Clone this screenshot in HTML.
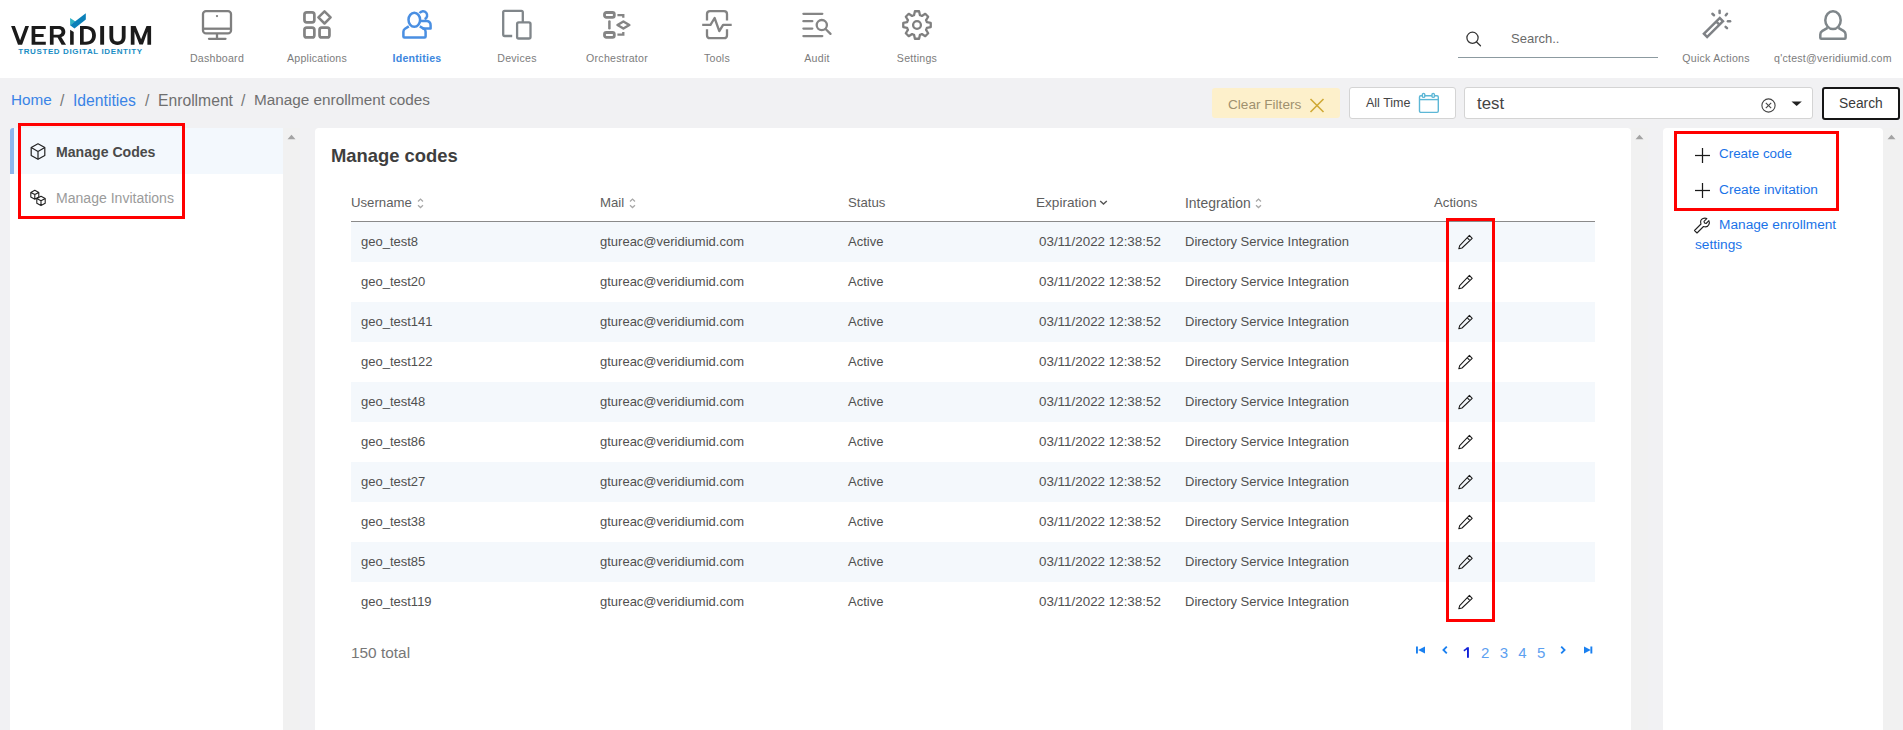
<!DOCTYPE html>
<html><head><meta charset="utf-8">
<style>
*{margin:0;padding:0;box-sizing:border-box}
html,body{width:1903px;height:730px;overflow:hidden;background:#f1f1f3;font-family:"Liberation Sans",sans-serif;position:relative}
.a{position:absolute;white-space:nowrap}
#hdr{position:absolute;left:0;top:0;width:1903px;height:78px;background:#fff}
.nl{position:absolute;top:52px;font-size:10.6px;color:#7c7c7c;letter-spacing:0.25px;text-align:center;width:100px}
.ic{position:absolute;overflow:visible}
.panel{position:absolute;background:#fff;border-radius:4px 4px 0 0}
.rb{position:absolute;border:3px solid #ff0000}
.row{position:absolute;left:351px;width:1244px;height:40px}
.row.s{background:#f4f8fc}
.cell{position:absolute;top:12px;font-size:13px;color:#505050;white-space:nowrap}
.th{position:absolute;top:195px;font-size:13.2px;color:#5e5e5e;white-space:nowrap}
.pen{position:absolute;left:1105px;top:10px}
</style></head><body>
<div id="hdr">
  <!-- logo -->
  <svg class="ic" style="left:0;top:0" width="170" height="78" viewBox="0 0 170 78">
    <g fill="#1b1b1b">
      <polygon points="11.1,26 14.9,26 20.1,40.2 25.3,26 29,26 22.1,44.7 18,44.7"/>
      <path d="M31.6 26 H45.8 V28.9 H35.3 V33.9 H43.6 V36.9 H35.3 V41.7 H45.8 V44.7 H31.6 Z"/>
      <path fill-rule="evenodd" d="M49.9 26 H58.5 C63 26 65.3 28.4 65.3 31.7 C65.3 35 63 37.5 58.5 37.5 H53.6 V44.7 H49.9 Z M53.6 28.9 V34.7 H58.3 C60.5 34.7 61.5 33.5 61.5 31.8 C61.5 30 60.5 28.9 58.3 28.9 Z"/>
      <polygon points="57.3,37 61.3,37 66,44.7 61.6,44.7"/>
      <polygon points="70.1,29.7 73.7,32.1 73.7,44.7 70.1,44.7"/>
      <path fill-rule="evenodd" d="M80 26 H86 C92.3 26 95.9 29.5 95.9 35.3 C95.9 41.1 92.3 44.7 86 44.7 H80 Z M83.7 29 V41.7 H85.8 C90 41.7 92.1 39.3 92.1 35.3 C92.1 31.3 90 29 85.8 29 Z"/>
      <rect x="100.2" y="26" width="3.9" height="18.7"/>
      <path d="M109.4 26 H113.2 V37 C113.2 40 114.8 41.6 117.5 41.6 C120.2 41.6 121.8 40 121.8 37 V26 H125.6 V37 C125.6 42 122.5 44.9 117.5 44.9 C112.5 44.9 109.4 42 109.4 37 Z"/>
      <polygon points="130.8,26 135.6,26 141.1,39.3 146.5,26 151.1,26 151.1,44.7 147.4,44.7 147.4,31.8 142.9,44.5 139.4,44.5 134.5,31.8 134.5,44.7 130.8,44.7"/>
    </g>
    <polygon points="70.1,17.9 75.5,21.6 70.1,25.5" fill="#2fb3c4"/>
    <polygon points="70.1,25.3 85.8,13.2 85.8,19.5 74.5,28.6" fill="#0b80b9"/>
    <text x="18.2" y="54" font-family="Liberation Sans" font-weight="700" font-size="8" fill="#1a8dc4" textLength="124" lengthAdjust="spacing">TRUSTED DIGITAL IDENTITY</text>
  </svg>
  <!-- Dashboard monitor -->
  <svg class="ic" style="left:200px;top:8px" width="34" height="34" viewBox="0 0 34 34" fill="none" stroke="#7f7f7f" stroke-width="2.3">
    <rect x="3" y="3.1" width="28" height="22.3" rx="3"/>
    <line x1="3" y1="20.7" x2="31" y2="20.7"/>
    <circle cx="17" cy="8.1" r="1.15" fill="#7f7f7f" stroke="none"/>
    <line x1="17" y1="25.5" x2="17" y2="30.5"/>
    <line x1="9" y1="30.8" x2="25.5" y2="30.8" stroke-linecap="round"/>
  </svg>
  <!-- Applications -->
  <svg class="ic" style="left:300px;top:8px" width="34" height="34" viewBox="0 0 34 34" fill="none" stroke="#838383" stroke-width="2.7">
    <rect x="4.45" y="4.45" width="9.9" height="9.9" rx="2.3"/>
    <rect x="4.45" y="19.55" width="9.9" height="9.9" rx="2.3"/>
    <rect x="19.55" y="19.55" width="9.9" height="9.9" rx="2.3"/>
    <path d="M24.5 3.3 L30.6 9.4 L24.5 15.5 L18.4 9.4 Z" stroke-linejoin="round" stroke-width="2.5"/>
  </svg>
  <!-- Identities -->
  <svg class="ic" style="left:400px;top:8px" width="34" height="34" viewBox="0 0 34 34" fill="none" stroke="#4a8fe2" stroke-width="2.5" stroke-linejoin="round">
    <ellipse cx="14.3" cy="11.8" rx="5.8" ry="7.0"/>
    <path d="M8.8 18.4 L5 20.8 Q3.4 21.9 3.4 23.8 L3.4 28.6 Q3.4 29.6 4.4 29.6 L24.6 29.6 Q25.6 29.6 25.6 28.6 L25.6 23.8 Q25.6 21.9 24 20.8 L19.8 18.4"/>
    <path d="M19.6 5.2 A4.1 4.1 0 1 1 24.6 11.2"/>
    <path d="M20.5 13 L26.8 13 Q30.6 13.5 30.6 17.2 L30.6 20.4 L22.5 20.4"/>
  </svg>
  <!-- Devices -->
  <svg class="ic" style="left:500px;top:8px" width="34" height="34" viewBox="0 0 34 34" fill="none" stroke="#80868a" stroke-width="2.3" stroke-linecap="round">
    <path d="M12.2 28 L4.6 28 Q3.2 28 3.2 26.6 L3.2 4.2 Q3.2 2.8 4.6 2.8 L21.4 2.8 Q22.8 2.8 22.8 4.2 L22.8 14" stroke-linecap="butt"/>
    <rect x="17.1" y="14.4" width="13.4" height="16.1" rx="1.6"/>
  </svg>
  <!-- Orchestrator -->
  <svg class="ic" style="left:600px;top:8px" width="34" height="34" viewBox="0 0 34 34" fill="none" stroke="#858585" stroke-width="2.8">
    <rect x="4.5" y="4.5" width="9.8" height="4.9" rx="1.8"/>
    <rect x="4.5" y="24.5" width="9.8" height="4.9" rx="1.8"/>
    <line x1="9.4" y1="13.6" x2="9.4" y2="20.3" stroke-width="2.5" stroke-linecap="round"/>
    <path d="M17.4 7.2 L23.3 7.2 L23.3 9.8 M17.4 26.6 L23.3 26.6 L23.3 24" stroke-width="2.3"/>
    <path d="M23.4 13.5 L29.3 17 L23.4 20.5 L17.5 17 Z" stroke-linejoin="round" stroke-width="2.5"/>
  </svg>
  <!-- Tools -->
  <svg class="ic" style="left:700px;top:8px" width="34" height="34" viewBox="0 0 34 34" fill="none" stroke="#838383" stroke-width="2.3">
    <path d="M7 12.4 L7 6.1 Q7 3.1 10 3.1 L24 3.1 Q27 3.1 27 6.1 L27 12.4"/>
    <path d="M7 21.2 L7 27.2 Q7 30.2 10 30.2 L24 30.2 Q27 30.2 27 27.2 L27 21.2"/>
    <path d="M2.2 16.8 L10.5 16.8 L14.6 10 L19.3 23.1 L23.1 16.8 L31.7 16.8" stroke-linejoin="round"/>
  </svg>
  <!-- Audit -->
  <svg class="ic" style="left:800px;top:8px" width="34" height="34" viewBox="0 0 34 34" fill="none" stroke="#858585" stroke-width="2.3" stroke-linecap="round">
    <line x1="3.4" y1="5.8" x2="22.3" y2="5.8"/>
    <line x1="3.4" y1="13.2" x2="12.3" y2="13.2"/>
    <line x1="3.4" y1="20.6" x2="12.3" y2="20.6"/>
    <line x1="3.4" y1="28.1" x2="22.3" y2="28.1"/>
    <circle cx="21.8" cy="17.1" r="5.1"/>
    <line x1="25.6" y1="21" x2="30.5" y2="25.9"/>
  </svg>
  <!-- Settings gear -->
  <svg class="ic" style="left:900px;top:8px" width="34" height="34" viewBox="0 0 34 34" fill="none" stroke="#7f7f7f" stroke-width="2.3" stroke-linejoin="round">
    <path d="M14.05 7.13 L14.92 3.26 L19.08 3.26 L19.95 7.13 A10.3 10.3 0 0 1 21.90 7.94 L25.25 5.81 L28.19 8.75 L26.06 12.10 A10.3 10.3 0 0 1 26.87 14.05 L30.74 14.92 L30.74 19.08 L26.87 19.95 A10.3 10.3 0 0 1 26.06 21.90 L28.19 25.25 L25.25 28.19 L21.90 26.06 A10.3 10.3 0 0 1 19.95 26.87 L19.08 30.74 L14.92 30.74 L14.05 26.87 A10.3 10.3 0 0 1 12.10 26.06 L8.75 28.19 L5.81 25.25 L7.94 21.90 A10.3 10.3 0 0 1 7.13 19.95 L3.26 19.08 L3.26 14.92 L7.13 14.05 A10.3 10.3 0 0 1 7.94 12.10 L5.81 8.75 L8.75 5.81 L12.10 7.94 A10.3 10.3 0 0 1 14.05 7.13 Z"/>
    <circle cx="17" cy="17" r="3.9"/>
  </svg>
  <!-- Search -->
  <svg class="ic" style="left:1464px;top:29px" width="20" height="20" viewBox="0 0 20 20" fill="none" stroke="#333" stroke-width="1.25">
    <circle cx="8.5" cy="8.8" r="5.6"/>
    <line x1="12.6" y1="13" x2="16.5" y2="16.8" stroke-linecap="round"/>
  </svg>
  <div class="a" style="left:1511px;top:31px;font-size:13px;color:#6a6a6a">Search..</div>
  <div class="a" style="left:1458px;top:56.5px;width:200px;height:1.3px;background:#8c9aa0"></div>
  <!-- Quick actions -->
  <svg class="ic" style="left:1700px;top:8px" width="34" height="34" viewBox="0 0 34 34" fill="none" stroke="#7f8286" stroke-width="2.5" stroke-linecap="round">
    <g transform="translate(13.45 19.5) rotate(-45)"><rect x="-11.2" y="-2.25" width="22.4" height="4.5" stroke-linecap="butt"/><line x1="6.2" y1="-2.25" x2="6.2" y2="2.25" stroke-linecap="butt"/></g>
    <line x1="19.6" y1="2.8" x2="19.6" y2="5.0"/>
    <line x1="12.4" y1="5.8" x2="14.0" y2="7.2"/>
    <line x1="27.0" y1="5.8" x2="25.8" y2="7.2"/>
    <line x1="27.9" y1="13.3" x2="30.1" y2="13.3"/>
    <line x1="25.6" y1="18.9" x2="27.0" y2="20.2"/>
  </svg>
  <div class="a" style="left:1666px;top:52px;width:100px;text-align:center;font-size:10.6px;color:#7c7c7c;letter-spacing:0.25px">Quick Actions</div>
  <!-- user -->
  <svg class="ic" style="left:1816px;top:8px" width="34" height="34" viewBox="0 0 34 34" fill="none" stroke="#7f868a" stroke-width="2.5" stroke-linejoin="round">
    <ellipse cx="17" cy="12.15" rx="7.7" ry="8.9"/>
    <path d="M11.6 19.9 L6.4 22.9 Q4.3 24.2 4.3 26.5 L4.3 29.7 Q4.3 30.7 5.3 30.7 L28.6 30.7 Q29.6 30.7 29.6 29.7 L29.6 26.5 Q29.6 24.2 27.5 22.9 L22.4 19.9"/>
  </svg>
  <div class="a" style="left:1774px;top:52px;font-size:10.6px;color:#7c7c7c;letter-spacing:0.25px">q'ctest@veridiumid.com</div>
  <!-- nav labels -->
  <div class="nl" style="left:167px">Dashboard</div>
  <div class="nl" style="left:267px">Applications</div>
  <div class="nl" style="left:367px;color:#3d87de;font-weight:700">Identities</div>
  <div class="nl" style="left:467px">Devices</div>
  <div class="nl" style="left:567px">Orchestrator</div>
  <div class="nl" style="left:667px">Tools</div>
  <div class="nl" style="left:767px">Audit</div>
  <div class="nl" style="left:867px">Settings</div>
</div>

<!-- breadcrumb -->
<div class="a" style="left:11px;top:90.5px;font-size:15.3px;color:#3a84e6">Home</div>
<div class="a" style="left:60px;top:91.5px;font-size:15.7px;color:#777">/</div>
<div class="a" style="left:73px;top:91.5px;font-size:15.7px;color:#3a84e6">Identities</div>
<div class="a" style="left:145px;top:91.5px;font-size:15.7px;color:#777">/</div>
<div class="a" style="left:158px;top:91.5px;font-size:15.7px;color:#6f6f6f">Enrollment</div>
<div class="a" style="left:241px;top:91.5px;font-size:15.7px;color:#777">/</div>
<div class="a" style="left:254px;top:90.5px;font-size:15.3px;color:#6f6f6f">Manage enrollment codes</div>

<!-- panels -->
<div class="panel" style="left:10px;top:128px;width:273px;height:602px"></div>
<div class="panel" style="left:315px;top:128px;width:1316px;height:602px"></div>
<div class="panel" style="left:1663px;top:128px;width:220px;height:602px"></div>


<!-- filter bar -->
<div class="a" style="left:1212px;top:88px;width:128px;height:30px;background:#fdf0cb;border-radius:3px"></div>
<div class="a" style="left:1228px;top:96.5px;font-size:13.6px;color:#9f916f">Clear Filters</div>
<svg class="ic" style="left:1309px;top:97px" width="16" height="16" viewBox="0 0 16 16" stroke="#cfa935" stroke-width="1.6" fill="none">
  <line x1="1.5" y1="2" x2="14.5" y2="15"/><line x1="14.5" y1="2" x2="1.5" y2="15"/>
</svg>
<div class="a" style="left:1349px;top:87px;width:107px;height:32px;background:#fff;border:1px solid #d4d4d4;border-radius:3px"></div>
<div class="a" style="left:1366px;top:96px;font-size:12.5px;color:#444">All Time</div>
<svg class="ic" style="left:1418px;top:92px" width="22" height="22" viewBox="0 0 22 22" stroke="#5db7d6" stroke-width="1.4" fill="none">
  <rect x="1.5" y="3.8" width="18.8" height="16.6" rx="1.3"/>
  <line x1="1.5" y1="7.6" x2="20.3" y2="7.6"/>
  <rect x="4.4" y="1.4" width="2.4" height="4" rx="1.2" fill="#fff"/><rect x="14" y="1.4" width="2.4" height="4" rx="1.2" fill="#fff"/>
</svg>
<div class="a" style="left:1464px;top:87px;width:349px;height:32px;background:#fff;border:1px solid #d4d4d4;border-radius:3px"></div>
<div class="a" style="left:1477px;top:94px;font-size:16.8px;color:#444">test</div>
<svg class="ic" style="left:1759.5px;top:97px" width="17" height="17" viewBox="0 0 17 17" stroke="#444" stroke-width="1.1" fill="none">
  <circle cx="8.5" cy="8.5" r="6.6"/>
  <line x1="5.8" y1="5.8" x2="11.2" y2="11.2"/><line x1="11.2" y1="5.8" x2="5.8" y2="11.2"/>
</svg>
<svg class="ic" style="left:1791px;top:100.5px" width="12" height="6" viewBox="0 0 12 6"><path d="M0.5 0.6 L10.8 0.6 L5.65 5 Z" fill="#222"/></svg>
<div class="a" style="left:1822px;top:86.5px;width:77.5px;height:33px;background:#fff;border:2px solid #161616;border-radius:3px"></div>
<div class="a" style="left:1839px;top:96px;font-size:13.8px;color:#3a3a3a">Search</div>

<!-- scroll strips -->
<div class="a" style="left:283px;top:128px;width:17px;height:602px;background:#f1f1f1"></div>
<div class="a" style="left:1631px;top:128px;width:17px;height:602px;background:#f1f1f1"></div>
<div class="a" style="left:1883px;top:128px;width:17px;height:602px;background:#f1f1f1"></div>
<svg class="ic" style="left:287px;top:134px" width="9" height="6" viewBox="0 0 9 6"><path d="M0.5 5.2 L4.5 0.8 L8.5 5.2 Z" fill="#a3a3a3"/></svg>
<svg class="ic" style="left:1635px;top:134px" width="9" height="6" viewBox="0 0 9 6"><path d="M0.5 5.2 L4.5 0.8 L8.5 5.2 Z" fill="#a3a3a3"/></svg>
<svg class="ic" style="left:1887px;top:134px" width="9" height="6" viewBox="0 0 9 6"><path d="M0.5 5.2 L4.5 0.8 L8.5 5.2 Z" fill="#a3a3a3"/></svg>

<!-- left panel -->
<div class="a" style="left:10px;top:128px;width:273px;height:46px;background:#f3f8fd"></div>
<div class="a" style="left:10px;top:128px;width:4px;height:46px;background:#8cb6ec;border-radius:3px 0 0 0"></div>
<svg class="ic" style="left:29px;top:142px" width="18" height="19" viewBox="0 0 18 19" stroke="#222" stroke-width="1.2" fill="none" stroke-linejoin="round">
  <path d="M9 1.8 L15.8 5.6 L15.8 13.4 L9 17.2 L2.2 13.4 L2.2 5.6 Z"/>
  <path d="M2.2 5.6 L9 9.4 L15.8 5.6 M9 9.4 L9 17.2"/>
</svg>
<div class="a" style="left:56px;top:143.5px;font-size:14.1px;font-weight:700;color:#4a4a4a">Manage Codes</div>
<svg class="ic" style="left:28px;top:188px" width="20" height="20" viewBox="0 0 20 20" stroke="#222" stroke-width="1.1" fill="none" stroke-linejoin="round">
  <path d="M6.8 2.2 L10.8 4.4 L10.8 9 L6.8 11.2 L2.8 9 L2.8 4.4 Z M2.8 4.4 L6.8 6.6 L10.8 4.4 M6.8 6.6 L6.8 11.2"/>
  <path d="M13 8.2 L17.2 10.5 L17.2 15.3 L13 17.6 L8.8 15.3 L8.8 10.5 Z M8.8 10.5 L13 12.8 L17.2 10.5 M13 12.8 L13 17.6"/>
</svg>
<div class="a" style="left:56px;top:189.5px;font-size:14.05px;color:#9b9b9b">Manage Invitations</div>
<div class="rb" style="left:18px;top:123px;width:167px;height:96px"></div>

<!-- main -->
<div class="a" style="left:331px;top:145px;font-size:18.4px;font-weight:700;color:#3e3e3e">Manage codes</div>
<div class="th" style="left:351px">Username</div>
<div class="th" style="left:600px">Mail</div>
<div class="th" style="left:848px">Status</div>
<div class="th" style="left:1036px;font-size:13.6px">Expiration</div>
<div class="th" style="left:1185px;font-size:13.9px">Integration</div>
<div class="th" style="left:1434px">Actions</div>
<svg class="ic" style="left:416px;top:196.5px" width="9" height="13" viewBox="0 0 9 13" fill="none" stroke="#a8a8a8" stroke-width="1.3"><path d="M2 4.4 L4.5 2.1 L7 4.4 M2 8.3 L4.5 10.6 L7 8.3"/></svg>
<svg class="ic" style="left:627.5px;top:196.5px" width="9" height="13" viewBox="0 0 9 13" fill="none" stroke="#a8a8a8" stroke-width="1.3"><path d="M2 4.4 L4.5 2.1 L7 4.4 M2 8.3 L4.5 10.6 L7 8.3"/></svg>
<svg class="ic" style="left:1254px;top:196.5px" width="9" height="13" viewBox="0 0 9 13" fill="none" stroke="#a8a8a8" stroke-width="1.3"><path d="M2 4.4 L4.5 2.1 L7 4.4 M2 8.3 L4.5 10.6 L7 8.3"/></svg>
<svg class="ic" style="left:1099px;top:199px" width="9" height="7" viewBox="0 0 9 7" fill="none" stroke="#555" stroke-width="1.4"><path d="M1.2 2 L4.5 5 L7.8 2"/></svg>
<div class="a" style="left:351px;top:221px;width:1244px;height:1px;background:#8a8a8a"></div>
<div class="row s" style="top:222px"><div class="cell" style="left:10px">geo_test8</div><div class="cell" style="left:249px">gtureac@veridiumid.com</div><div class="cell" style="left:497px">Active</div><div class="cell" style="left:688px;font-size:13.4px">03/11/2022 12:38:52</div><div class="cell" style="left:834px">Directory Service Integration</div><svg class="pen" width="20" height="20" viewBox="0 0 20 20" fill="none" stroke="#1a1a1a" stroke-width="1.05" stroke-linejoin="round"><path d="M2.8 16.8 L3.7 13.6 L13.4 3.4 L16.2 6.3 L6 16 Z M11.2 5.7 L13.9 8.6"/></svg></div>
<div class="row" style="top:262px"><div class="cell" style="left:10px">geo_test20</div><div class="cell" style="left:249px">gtureac@veridiumid.com</div><div class="cell" style="left:497px">Active</div><div class="cell" style="left:688px;font-size:13.4px">03/11/2022 12:38:52</div><div class="cell" style="left:834px">Directory Service Integration</div><svg class="pen" width="20" height="20" viewBox="0 0 20 20" fill="none" stroke="#1a1a1a" stroke-width="1.05" stroke-linejoin="round"><path d="M2.8 16.8 L3.7 13.6 L13.4 3.4 L16.2 6.3 L6 16 Z M11.2 5.7 L13.9 8.6"/></svg></div>
<div class="row s" style="top:302px"><div class="cell" style="left:10px">geo_test141</div><div class="cell" style="left:249px">gtureac@veridiumid.com</div><div class="cell" style="left:497px">Active</div><div class="cell" style="left:688px;font-size:13.4px">03/11/2022 12:38:52</div><div class="cell" style="left:834px">Directory Service Integration</div><svg class="pen" width="20" height="20" viewBox="0 0 20 20" fill="none" stroke="#1a1a1a" stroke-width="1.05" stroke-linejoin="round"><path d="M2.8 16.8 L3.7 13.6 L13.4 3.4 L16.2 6.3 L6 16 Z M11.2 5.7 L13.9 8.6"/></svg></div>
<div class="row" style="top:342px"><div class="cell" style="left:10px">geo_test122</div><div class="cell" style="left:249px">gtureac@veridiumid.com</div><div class="cell" style="left:497px">Active</div><div class="cell" style="left:688px;font-size:13.4px">03/11/2022 12:38:52</div><div class="cell" style="left:834px">Directory Service Integration</div><svg class="pen" width="20" height="20" viewBox="0 0 20 20" fill="none" stroke="#1a1a1a" stroke-width="1.05" stroke-linejoin="round"><path d="M2.8 16.8 L3.7 13.6 L13.4 3.4 L16.2 6.3 L6 16 Z M11.2 5.7 L13.9 8.6"/></svg></div>
<div class="row s" style="top:382px"><div class="cell" style="left:10px">geo_test48</div><div class="cell" style="left:249px">gtureac@veridiumid.com</div><div class="cell" style="left:497px">Active</div><div class="cell" style="left:688px;font-size:13.4px">03/11/2022 12:38:52</div><div class="cell" style="left:834px">Directory Service Integration</div><svg class="pen" width="20" height="20" viewBox="0 0 20 20" fill="none" stroke="#1a1a1a" stroke-width="1.05" stroke-linejoin="round"><path d="M2.8 16.8 L3.7 13.6 L13.4 3.4 L16.2 6.3 L6 16 Z M11.2 5.7 L13.9 8.6"/></svg></div>
<div class="row" style="top:422px"><div class="cell" style="left:10px">geo_test86</div><div class="cell" style="left:249px">gtureac@veridiumid.com</div><div class="cell" style="left:497px">Active</div><div class="cell" style="left:688px;font-size:13.4px">03/11/2022 12:38:52</div><div class="cell" style="left:834px">Directory Service Integration</div><svg class="pen" width="20" height="20" viewBox="0 0 20 20" fill="none" stroke="#1a1a1a" stroke-width="1.05" stroke-linejoin="round"><path d="M2.8 16.8 L3.7 13.6 L13.4 3.4 L16.2 6.3 L6 16 Z M11.2 5.7 L13.9 8.6"/></svg></div>
<div class="row s" style="top:462px"><div class="cell" style="left:10px">geo_test27</div><div class="cell" style="left:249px">gtureac@veridiumid.com</div><div class="cell" style="left:497px">Active</div><div class="cell" style="left:688px;font-size:13.4px">03/11/2022 12:38:52</div><div class="cell" style="left:834px">Directory Service Integration</div><svg class="pen" width="20" height="20" viewBox="0 0 20 20" fill="none" stroke="#1a1a1a" stroke-width="1.05" stroke-linejoin="round"><path d="M2.8 16.8 L3.7 13.6 L13.4 3.4 L16.2 6.3 L6 16 Z M11.2 5.7 L13.9 8.6"/></svg></div>
<div class="row" style="top:502px"><div class="cell" style="left:10px">geo_test38</div><div class="cell" style="left:249px">gtureac@veridiumid.com</div><div class="cell" style="left:497px">Active</div><div class="cell" style="left:688px;font-size:13.4px">03/11/2022 12:38:52</div><div class="cell" style="left:834px">Directory Service Integration</div><svg class="pen" width="20" height="20" viewBox="0 0 20 20" fill="none" stroke="#1a1a1a" stroke-width="1.05" stroke-linejoin="round"><path d="M2.8 16.8 L3.7 13.6 L13.4 3.4 L16.2 6.3 L6 16 Z M11.2 5.7 L13.9 8.6"/></svg></div>
<div class="row s" style="top:542px"><div class="cell" style="left:10px">geo_test85</div><div class="cell" style="left:249px">gtureac@veridiumid.com</div><div class="cell" style="left:497px">Active</div><div class="cell" style="left:688px;font-size:13.4px">03/11/2022 12:38:52</div><div class="cell" style="left:834px">Directory Service Integration</div><svg class="pen" width="20" height="20" viewBox="0 0 20 20" fill="none" stroke="#1a1a1a" stroke-width="1.05" stroke-linejoin="round"><path d="M2.8 16.8 L3.7 13.6 L13.4 3.4 L16.2 6.3 L6 16 Z M11.2 5.7 L13.9 8.6"/></svg></div>
<div class="row" style="top:582px"><div class="cell" style="left:10px">geo_test119</div><div class="cell" style="left:249px">gtureac@veridiumid.com</div><div class="cell" style="left:497px">Active</div><div class="cell" style="left:688px;font-size:13.4px">03/11/2022 12:38:52</div><div class="cell" style="left:834px">Directory Service Integration</div><svg class="pen" width="20" height="20" viewBox="0 0 20 20" fill="none" stroke="#1a1a1a" stroke-width="1.05" stroke-linejoin="round"><path d="M2.8 16.8 L3.7 13.6 L13.4 3.4 L16.2 6.3 L6 16 Z M11.2 5.7 L13.9 8.6"/></svg></div>

<div class="a" style="left:351px;top:644px;font-size:15.4px;color:#777">150 total</div>
<svg class="ic" style="left:1415px;top:646px" width="11" height="8" viewBox="0 0 11 8" fill="#1a80f0"><rect x="1" y="0.5" width="1.9" height="7"/><path d="M10 0.5 L3.2 4 L10 7.5 Z"/></svg>
<svg class="ic" style="left:1441px;top:645px" width="8" height="10" viewBox="0 0 8 10" fill="none" stroke="#1a80f0" stroke-width="1.8"><path d="M5.8 1.6 L2.4 5 L5.8 8.4"/></svg>
<svg class="ic" style="left:1462px;top:646px" width="9" height="13" viewBox="0 0 9 13" fill="#1020d8"><path d="M5 1.2 L6.9 1.2 L6.9 11.8 L5 11.8 L5 3.6 Q3.6 4.8 2.1 5.4 L1.5 3.9 Q3.6 2.9 5 1.2 Z"/></svg>
<div class="a" style="left:1481px;top:643.5px;font-size:15px;color:#5ca0f0">2</div>
<div class="a" style="left:1499.8px;top:643.5px;font-size:15px;color:#5ca0f0">3</div>
<div class="a" style="left:1518.3px;top:643.5px;font-size:15px;color:#5ca0f0">4</div>
<div class="a" style="left:1537px;top:643.5px;font-size:15px;color:#5ca0f0">5</div>
<svg class="ic" style="left:1559px;top:645px" width="8" height="10" viewBox="0 0 8 10" fill="none" stroke="#1a80f0" stroke-width="1.8"><path d="M2.2 1.6 L5.6 5 L2.2 8.4"/></svg>
<svg class="ic" style="left:1583px;top:646px" width="11" height="8" viewBox="0 0 11 8" fill="#1a80f0"><rect x="7.4" y="0.5" width="1.9" height="7"/><path d="M1 0.5 L7.8 4 L1 7.5 Z"/></svg>
<div class="rb" style="left:1446px;top:218px;width:49px;height:404px"></div>

<!-- right panel -->
<svg class="ic" style="left:1695px;top:148px" width="15" height="15" viewBox="0 0 15 15" stroke="#1a1a1a" stroke-width="1.25"><line x1="7.5" y1="0" x2="7.5" y2="15"/><line x1="0" y1="7.5" x2="15" y2="7.5"/></svg>
<div class="a" style="left:1719px;top:146px;font-size:13.4px;color:#1a73e8">Create code</div>
<svg class="ic" style="left:1695px;top:183px" width="15" height="15" viewBox="0 0 15 15" stroke="#1a1a1a" stroke-width="1.25"><line x1="7.5" y1="0" x2="7.5" y2="15"/><line x1="0" y1="7.5" x2="15" y2="7.5"/></svg>
<div class="a" style="left:1719px;top:182px;font-size:13.7px;color:#1a73e8">Create invitation</div>
<svg class="ic" style="left:1693px;top:217px" width="18" height="17" viewBox="0 0 18 17" stroke="#222" stroke-width="1.1" fill="none" stroke-linejoin="round">
  <path d="M1.5 13.5 L8 7 C7.2 4.8 8 2.5 10 1.6 C11.3 1 12.8 1.1 13.8 1.6 L11 4.4 L11.5 6 L13.1 6.5 L15.9 3.7 C16.4 4.7 16.5 6.2 15.9 7.5 C15 9.5 12.7 10.3 10.5 9.5 L4 16 Z"/>
</svg>
<div class="a" style="left:1719px;top:217px;font-size:13.7px;color:#1a73e8">Manage enrollment</div>
<div class="a" style="left:1695px;top:237px;font-size:13.7px;color:#1a73e8">settings</div>
<div class="rb" style="left:1674px;top:131px;width:165px;height:80px"></div>
</body></html>
